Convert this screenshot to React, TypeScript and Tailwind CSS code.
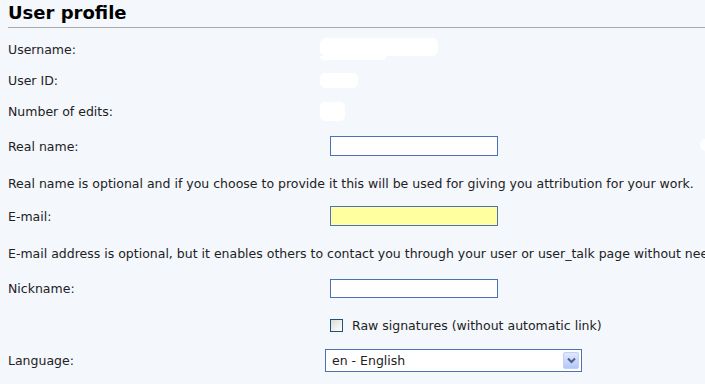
import React from "react";

const font = { fontFamily: '"DejaVu Sans", Verdana, sans-serif' };

function Row({ h, label, children }: { h: string; label?: string; children?: React.ReactNode }) {
  return (
    <div className={`flex items-center ${h}`}>
      <div className="w-[330px] shrink-0 pl-2">{label}</div>
      <div className="flex items-center">{children}</div>
    </div>
  );
}

function Note({ h, text }: { h: string; text: string }) {
  return (
    <div className={`flex items-center whitespace-nowrap pl-2 ${h}`}>{text}</div>
  );
}

export default function App() {
  return (
    <div
      className="relative h-[384px] w-[705px] overflow-hidden bg-[#f4f7fc] text-[12.5px] leading-[15px] text-[#222]"
      style={font}
    >
      <div className="absolute left-[700px] top-[139px] h-[12px] w-[12px] rounded-full bg-white" />
      <div className="ml-2 flex h-[28px] items-end border-b border-[#a8a8a8] pb-[3px]">
        <h1 className="text-[18px] font-bold leading-[22px] text-black">User profile</h1>
      </div>
      <div className="pt-[6px]">
        <Row h="h-[30px]" label="Username:">
          <div className="-ml-[10px] flex flex-col">
            <div className="h-[18px] w-[118px] rounded-[6px] bg-white" />
            <div className="h-[4px] w-[66px] rounded-b-[4px] bg-white" />
          </div>
        </Row>
        <Row h="h-[32px]" label="User ID:">
          <div className="-ml-[10px] h-[15px] w-[38px] rounded-[5px] bg-white" />
        </Row>
        <Row h="h-[30px]" label="Number of edits:">
          <div className="-ml-[10px] h-[19px] w-[25px] rounded-[5px] bg-white" />
        </Row>
        <Row h="h-[40px]" label="Real name:">
          <div className="h-[20px] w-[168px] border border-[#4a73b3] bg-white" />
        </Row>
        <Note
          h="h-[34px]"
          text="Real name is optional and if you choose to provide it this will be used for giving you attribution for your work."
        />
        <Row h="h-[32px]" label="E-mail:">
          <div className="h-[20px] w-[168px] border border-[#4a73b3] bg-[#ffff9f]" />
        </Row>
        <Note
          h="h-[42px]"
          text="E-mail address is optional, but it enables others to contact you through your user or user_talk page without needing to reveal your address."
        />
        <Row h="h-[28px]" label="Nickname:">
          <div className="h-[19px] w-[168px] border border-[#4a73b3] bg-white" />
        </Row>
        <Row h="h-[46px]">
          <div className="flex items-center">
            <div className="h-[13px] w-[13px] border border-[#1c5180] bg-gradient-to-br from-[#dcdcd6] to-white" />
            <span className="ml-[9px]">Raw signatures (without automatic link)</span>
          </div>
        </Row>
        <div className="flex h-[24px] items-center">
          <div className="w-[325px] shrink-0 pl-2">Language:</div>
          <div className="flex h-[23px] w-[257px] items-center justify-between border border-[#4a73b3] bg-white pl-[6px] pr-[2px]">
            <span>en - English</span>
            <div className="flex h-[17px] w-[16px] items-center justify-center rounded-[2px] border border-[#c0d0f6] bg-gradient-to-b from-[#e0e8fe] to-[#b4c8f6]">
              <svg width="9" height="7" viewBox="0 0 9 7">
                <path d="M1 1.5 L4.5 5 L8 1.5" fill="none" stroke="#4d6185" strokeWidth="2" />
              </svg>
            </div>
          </div>
        </div>
      </div>
    </div>
  );
}
